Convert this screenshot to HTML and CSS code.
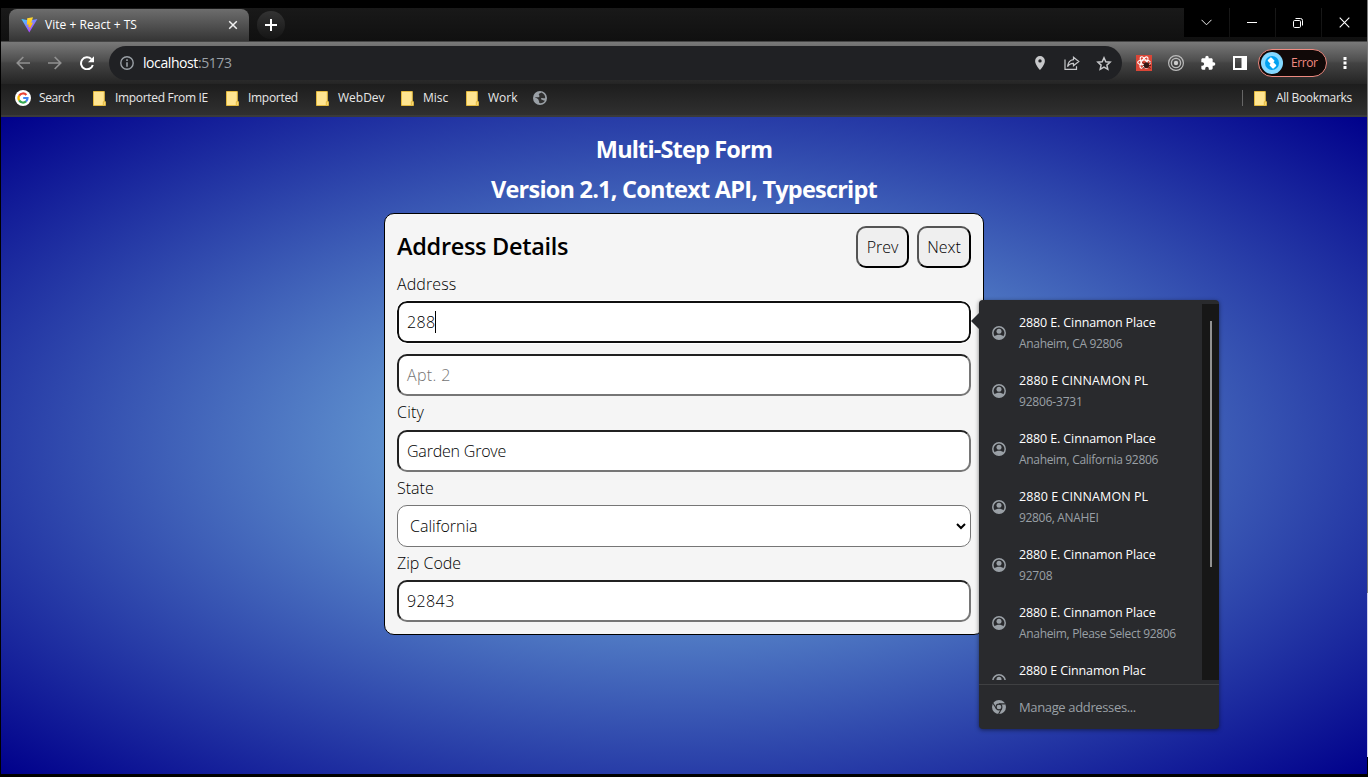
FILE: index.html
```html
<!DOCTYPE html>
<html lang="en">
<head>
<meta charset="utf-8">
<title>Vite + React + TS</title>
<link rel="stylesheet" href="styles.css">
</head>
<body>
<svg class="defs" width="0" height="0">
  <symbol id="folder" viewBox="0 0 13 15"><path d="M.5.5h10.8v10.2h.9v3.8H.5z" fill="#ffe591" stroke="#e3b93e"/><path d="M10.3 14.5v-3.8h1.9v3.8z" fill="#ffe591" stroke="#e3b93e"/></symbol>
  <symbol id="person" viewBox="0 0 14 14"><circle cx="7" cy="7" r="6.2" fill="none" stroke="#9aa0a6" stroke-width="1.5"/><circle cx="7" cy="5.2" r="2.5" fill="#9aa0a6"/><path d="M2.3 10.8C3.1 9.2 5.6 8.7 7 8.7s3.900.5 4.700 2.100A6 6 0 0 1 7 13.300a6 6 0 0 1-4.700-2.500z" fill="#9aa0a6"/></symbol>
</svg>
<div class="window">
  <div class="tabstrip">
    <div class="tab">
      <svg class="vite" width="17" height="16" viewBox="0 0 17 16"><defs><linearGradient id="va" x1="0" y1="0" x2=".7" y2="1"><stop offset="0" stop-color="#41d1ff"/><stop offset="1" stop-color="#bd34fe"/></linearGradient><linearGradient id="vb" x1="0" y1="0" x2="0" y2="1"><stop offset="0" stop-color="#ffdd35"/><stop offset="1" stop-color="#ffa800"/></linearGradient></defs><path d="M.4 2 8.300 15.600 16.400 2 8.500 3.400z" fill="url(#va)"/><path d="M12 .2 6.200 1.300 5.900 7.800l1.900-.4-.6 2.700 1.500-.4-.5 3.300 3.900-7.500-1.900.4z" fill="url(#vb)"/></svg>
      <span class="tab-title">Vite + React + TS</span>
      <svg class="tab-close" width="10" height="10" viewBox="0 0 10 10"><path d="M1.200 1.200l7.600 7.600M8.800 1.200 1.200 8.800" stroke="#f1f1f1" stroke-width="1.500"/></svg>
    </div>
    <div class="newtab"><svg width="12" height="12" viewBox="0 0 12 12"><path d="M6 0v12M0 6h12" stroke="#fff" stroke-width="2"/></svg></div>
    <div class="controls">
      <div class="control"><svg width="11" height="7" viewBox="0 0 11 7"><path d="M.5.8l5 5 5-5" fill="none" stroke="#eee"/></svg></div>
      <div class="control"><svg width="10" height="1" viewBox="0 0 10 1"><path d="M0 .5h10" stroke="#fff"/></svg></div>
      <div class="control"><svg width="10" height="10" viewBox="0 0 10 10"><rect x=".5" y="2.500" width="7" height="7" rx="1.200" fill="none" stroke="#fff"/><path d="M2.500.5h5a2 2 0 0 1 2 2v5" fill="none" stroke="#fff"/></svg></div>
      <div class="control"><svg width="11" height="11" viewBox="0 0 11 11"><path d="M.7.7l9.600 9.600M10.300.7.7 10.300" stroke="#fff" stroke-width="1.100"/></svg></div>
    </div>
  </div>
  <div class="toolbar">
    <svg class="nav" width="14" height="14" viewBox="0 0 14 14"><path d="M14 7H1.500M7.300 1 1.300 7l6 6" fill="none" stroke="#919191" stroke-width="1.700"/></svg>
    <svg class="nav" width="14" height="14" viewBox="0 0 14 14"><path d="M0 7h12.500M6.700 1l6 6-6 6" fill="none" stroke="#919191" stroke-width="1.700"/></svg>
    <svg class="nav" width="14" height="14" viewBox="0 0 14 14"><path d="M11.300 3A6 6 0 1 0 12.800 9" fill="none" stroke="#fff" stroke-width="2"/><path d="M14 .2v6H8z" fill="#fff"/></svg>
    <div class="omnibox">
      <svg width="14" height="14" viewBox="0 0 14 14"><circle cx="7" cy="7" r="6.200" fill="none" stroke="#9aa0a6" stroke-width="1.400"/><path d="M7 3.300v1.600M7 6.200v4.500" stroke="#9aa0a6" stroke-width="1.600"/></svg>
      <div class="url">localhost<span>:5173</span></div>
      <div class="omni-icons">
        <svg width="10" height="14" viewBox="0 0 10 14"><path d="M5 0a4.900 4.900 0 0 0-4.900 4.900C.1 8.500 5 14 5 14s4.900-5.500 4.900-9.100A4.900 4.900 0 0 0 5 0zm0 6.600a1.700 1.700 0 1 1 0-3.400 1.700 1.700 0 0 1 0 3.400z" fill="#c7c8ca"/></svg>
        <svg width="16" height="14" viewBox="0 0 16 14"><path d="M1 3.500v9.800h11.500v-3" fill="none" stroke="#c7c8ca" stroke-width="1.200"/><path d="M9.500 1.200 14.800 5.500 9.500 9.800V7.300C6.500 7.200 4.700 8.500 3.500 10.600 4 6.500 6 4.100 9.500 3.700z" fill="none" stroke="#c7c8ca" stroke-width="1.200"/></svg>
        <svg width="16" height="15" viewBox="0 0 16 15"><path d="M8 1.800l1.800 4 4.300.4-3.200 2.900.9 4.200L8 11.100l-3.800 2.200.9-4.200-3.200-2.900 4.300-.4z" fill="none" stroke="#c7c8ca" stroke-width="1.500"/></svg>
      </div>
    </div>
    <div class="extensions">
      <svg width="16" height="16" viewBox="0 0 16 16"><path d="M0 0h16v16H0z" fill="#da4637"/><g fill="none" stroke="#fff" stroke-width="1.100"><ellipse cx="8" cy="7.500" rx="6.300" ry="2.500"/><ellipse cx="8" cy="7.500" rx="6.300" ry="2.500" transform="rotate(60 8 7.500)"/><ellipse cx="8" cy="7.500" rx="6.300" ry="2.500" transform="rotate(120 8 7.500)"/></g><ellipse cx="10.500" cy="10.300" rx="2.600" ry="3" fill="#341613"/><path d="M6.500 7.500l8 6M14.500 7.500l-8 6M6.500 10.500h8.500" stroke="#341613" stroke-width=".8"/></svg>
      <svg width="16" height="16" viewBox="0 0 16 16"><circle cx="8" cy="8" r="7.400" fill="none" stroke="#bbb" stroke-width="1.200"/><circle cx="8" cy="8" r="4.600" fill="none" stroke="#bbb" stroke-width="1.400"/><circle cx="8" cy="8" r="2.200" fill="#ccc"/></svg>
      <svg width="16" height="16" viewBox="0 0 24 24"><path d="M20.500 11H19V7c0-1.100-.9-2-2-2h-4V3.500a2.500 2.500 0 0 0-5 0V5H4c-1.100 0-2 .9-2 2v3.800h1.500a2.700 2.700 0 0 1 0 5.400H2V20c0 1.100.9 2 2 2h3.800v-1.500a2.700 2.700 0 0 1 5.400 0V22H17c1.100 0 2-.9 2-2v-4h1.500a2.500 2.500 0 0 0 0-5z" fill="#fff"/></svg>
      <svg width="16" height="16" viewBox="0 0 16 16"><path d="M2 2h12v12H2z" fill="none" stroke="#fff" stroke-width="2"/><path d="M9.500 1H15v14H9.500z" fill="#fff"/></svg>
    </div>
    <div class="profile">
      <svg width="22" height="22" viewBox="0 0 22 22"><circle cx="11" cy="11" r="11" fill="#84d8ff"/><circle cx="11" cy="11" r="7" fill="#00a1f1"/><g fill="#fff" transform="rotate(45 11 11)"><rect x="6" y="7.500" width="5.500" height="5" rx="1"/><rect x="10.500" y="9.500" width="5.500" height="5" rx="1"/></g></svg>
      <span>Error</span>
    </div>
    <svg class="kebab" width="4" height="14" viewBox="0 0 4 14"><path d="M.5 1h3v3h-3zM.5 5.500h3v3h-3zM.5 10h3v3h-3z" fill="#fff"/></svg>
  </div>
  <div class="bookmarks">
    <svg class="google" width="16" height="16" viewBox="0 0 16 16"><circle cx="8" cy="8" r="8" fill="#fff"/><g fill="none" stroke-width="2.200"><path d="M4.200 5.600A4.500 4.500 0 0 1 11.400 5" stroke="#ea4335"/><path d="M4.200 10.400A4.500 4.500 0 0 1 4.200 5.600" stroke="#fbbc05"/><path d="M11 11.400A4.500 4.500 0 0 1 4.200 10.400" stroke="#34a853"/><path d="M8.200 8h4.300A4.500 4.500 0 0 1 11 11.400" stroke="#4285f4"/></g></svg>
    <span class="bm search">Search</span>
    <svg class="folder"><use href="#folder"/></svg><span class="bm ie">Imported From IE</span>
    <svg class="folder"><use href="#folder"/></svg><span class="bm imported">Imported</span>
    <svg class="folder"><use href="#folder"/></svg><span class="bm webdev">WebDev</span>
    <svg class="folder"><use href="#folder"/></svg><span class="bm misc">Misc</span>
    <svg class="folder"><use href="#folder"/></svg><span class="bm work">Work</span>
    <svg width="14" height="14" viewBox="0 0 14 14"><circle cx="7" cy="7" r="7" fill="#9aa0a6"/><path d="M8.300 1.500c-.6 1-2.300.7-2.500 1.800-.2 1 1 1.200.6 2.200C5.800 6.800 3.500 6.200 1.800 6c.8 1.200 3.500 1.500 3.700 2.800.2 1.300 1.300 2 .6 3.200 2.500.5 5-.4 5.700-2.500-1.200.5-1.500-.8-2.800-.8-1 0-1.300-1-.6-1.600.9-.7 2.500.5 3.800.2C12.500 4.800 11 2.300 8.300 1.500z" fill="#303030"/></svg>
    <div class="all"><svg class="folder"><use href="#folder"/></svg><span class="bm allbm">All Bookmarks</span></div>
  </div>
  <main class="page">
    <h1 class="title one">Multi-Step Form</h1>
    <h1 class="title two">Version 2.1, Context API, Typescript</h1>
    <form class="card">
      <div class="card-head">
        <h2 class="heading">Address Details</h2>
        <button type="button" class="btn prev">Prev</button>
        <button type="button" class="btn next">Next</button>
      </div>
      <div class="label address">Address</div>
      <div class="field focus"><span class="num">288</span><span class="caret"></span></div>
      <div class="field second placeholder">Apt. 2</div>
      <div class="label city">City</div>
      <div class="field grove">Garden Grove</div>
      <div class="label">State</div>
      <div class="field select"><span>California</span><svg width="10" height="7" viewBox="0 0 10 7"><path d="M1 1l4 4 4-4" fill="none" stroke="#000" stroke-width="2"/></svg></div>
      <div class="label zip">Zip Code</div>
      <div class="field num">92843</div>
    </form>
  </main>
</div>
<div class="popup">
  <svg class="arrow" width="8" height="16" viewBox="0 0 8 16"><path d="M8 0 0 8l8 8z" fill="#292a2d"/></svg>
  <div class="list">
    <div class="items">
      <div class="item"><svg width="14" height="14"><use href="#person"/></svg><div><div class="name">2880 E. Cinnamon Place</div><div class="sub">Anaheim, CA 92806</div></div></div>
      <div class="item"><svg width="14" height="14"><use href="#person"/></svg><div><div class="name caps">2880 E CINNAMON PL</div><div class="sub digits">92806-3731</div></div></div>
      <div class="item"><svg width="14" height="14"><use href="#person"/></svg><div><div class="name">2880 E. Cinnamon Place</div><div class="sub">Anaheim, California 92806</div></div></div>
      <div class="item"><svg width="14" height="14"><use href="#person"/></svg><div><div class="name caps">2880 E CINNAMON PL</div><div class="sub">92806, ANAHEI</div></div></div>
      <div class="item"><svg width="14" height="14"><use href="#person"/></svg><div><div class="name">2880 E. Cinnamon Place</div><div class="sub digits">92708</div></div></div>
      <div class="item"><svg width="14" height="14"><use href="#person"/></svg><div><div class="name">2880 E. Cinnamon Place</div><div class="sub">Anaheim, Please Select 92806</div></div></div>
      <div class="item"><svg width="14" height="14"><use href="#person"/></svg><div><div class="name">2880 E Cinnamon Plac</div></div></div>
    </div>
    <div class="track"><div class="thumb"></div></div>
  </div>
  <div class="manage">
    <svg width="14" height="14" viewBox="0 0 14 14"><circle cx="7" cy="7" r="7" fill="#9aa0a6"/><circle cx="7" cy="7" r="2.900" fill="#9aa0a6" stroke="#292a2d" stroke-width="1.100"/><path d="M7 3.900h6.500M4.300 8.500 1 3.200M9.700 8.500 6.600 14" stroke="#292a2d" stroke-width="1.100"/></svg>
    <span>Manage addresses...</span>
  </div>
</div>
</body>
</html>
```
FILE: styles.css
```css
* { box-sizing: border-box; }
body { margin: 0; width: 1368px; height: 777px; overflow: hidden; background: #000; font-family: "Open Sans", "Noto Sans", sans-serif; }
svg { flex: none; display: block; }
.defs { position: absolute; }
.window { display: flex; flex-direction: column; height: 777px; padding: 8px 1px 3px; background: linear-gradient(#7c7c7c 593px, #cfcfec 593px, #cfcfec 757px, #000 757px) right / 1px 100% no-repeat; }
.tabstrip { display: flex; height: 33px; flex: none; padding-left: 8px; background: linear-gradient(#191919, #101010); }
.tab { display: flex; align-items: center; width: 240px; height: 32px; margin-top: 1px; padding: 0 11px 0 12px; border-radius: 8px 8px 0 0; background: linear-gradient(#6d6d6d, #353535); color: #fff; font-size: 12px; }
.tab-title { margin-left: 7px; margin-top: -2px; letter-spacing: .03px; white-space: nowrap; }
.tab-close { margin-left: auto; }
.newtab { display: flex; align-items: center; justify-content: center; width: 28px; height: 28px; margin: 3px 0 0 8px; border-radius: 50%; background: linear-gradient(#333, #151515); }
.controls { display: flex; gap: 1px; margin-left: auto; height: 29px; }
.control { display: flex; align-items: center; justify-content: center; width: 45px; padding-right: 1px; background: #000; }
.toolbar { display: flex; align-items: center; height: 43px; flex: none; padding-left: 15px; border-top: 1px solid #454545; background: linear-gradient(#797979, #4e4e4e 45%, #434343 50%, #242424); }
.nav { margin-right: 18px; }
.omnibox { display: flex; align-items: center; width: 1013px; height: 34px; margin-left: -3px; padding: 0 10px 0 11px; border-radius: 17px; background: #202124; }
.url { margin: -2px 0 0 9px; color: #fff; font-size: 14px; letter-spacing: -.42px; }
.url span { color: #9aa0a6; }
.omni-icons { display: flex; align-items: center; gap: 16px; margin-left: auto; }
.omni-icons svg:first-child { margin-right: 3px; }
.extensions { display: flex; gap: 16px; margin-left: 14px; }
.profile { display: flex; align-items: center; width: 69px; height: 28px; margin-left: 10px; padding-left: 2px; border: 1.500px solid #ee8a80; border-radius: 14px; background: #110908; color: #f28b82; font-size: 12px; letter-spacing: -.4px; }
.profile span { margin: -2px 0 0 8px; }
.kebab { margin-left: 16px; }
.bookmarks { display: flex; align-items: center; height: 33px; flex: none; padding: 0 15px 5px 14px; background: linear-gradient(#1d1d1d, #303030 94%, #3a3a3a 94%); color: #e8e8e8; font-size: 12px; white-space: nowrap; }
.folder { width: 13px; height: 15px; }
.google { margin-right: -1px; }
.bm { margin: -2px 0 0 9px; }
.search { width: 54px; letter-spacing: -.45px; }
.ie { width: 111px; letter-spacing: -.32px; }
.imported { width: 68px; letter-spacing: -.3px; }
.webdev { width: 63px; }
.misc { width: 43px; }
.work { width: 45px; }
.allbm { letter-spacing: -.3px; }
.all { display: flex; align-items: center; height: 16px; margin-left: auto; padding-left: 11px; border-left: 1px solid #666; }
.page { display: flex; flex-direction: column; align-items: center; flex: 1; padding-top: 12px; background: radial-gradient(skyblue, darkblue); }
.title { margin: 0; height: 40px; line-height: 40px; color: #fff; font-size: 23.500px; font-weight: 700; letter-spacing: -.84px; white-space: nowrap; }
.two { height: 44px; letter-spacing: -.78px; }
.card { width: 600px; height: 422px; padding: 12px; border: 1px solid #000; border-radius: 10px; background: #f5f5f5; color: #000; font-size: 16px; font-weight: 330; }
.card-head { display: flex; align-items: center; gap: 8px; height: 42px; }
.heading { flex: 1; margin: -2px 0 0; font-size: 23.500px; font-weight: 600; letter-spacing: -.3px; }
.btn { width: 53px; height: 42px; padding: 0 0 1px; border: 2px outset #000; border-radius: 10px; background: #efefef; color: #000; font: inherit; }
.next { width: 54px; }
.label { height: 33px; line-height: 33px; }
.address { letter-spacing: .1px; }
.city { height: 34px; letter-spacing: .2px; }
.field { display: flex; align-items: center; height: 42px; padding: 0 8px 1px; border: 2px inset #767676; border-radius: 10px; background: #fff; }
.grove { letter-spacing: -.2px; }
.num { letter-spacing: .4px; }
.focus { border: 2px solid #101010; outline: 1px solid #fff; }
.second { margin-top: 11px; }
.placeholder { color: #757575; letter-spacing: .35px; }
.caret { width: 1px; height: 22px; margin-left: -1px; background: #000; }
.select { justify-content: space-between; padding: 0 4px 0 12px; border: 1px solid #767676; }
.popup { position: absolute; left: 979px; top: 300px; width: 240px; height: 429px; padding-top: 4px; border-radius: 4px; background: #292a2d; box-shadow: 0 1px 4px rgba(0,0,0,.5); }
.arrow { position: absolute; left: -8px; top: 13px; }
.list { display: flex; height: 376px; overflow: hidden; }
.items { flex: 1; }
.item { display: flex; align-items: center; gap: 13px; height: 58px; padding-left: 13px; white-space: nowrap; }
.item:last-child > div { height: 42px; }
.name { height: 21px; line-height: 21px; color: #fff; font-size: 12.500px; letter-spacing: -.12px; }
.caps { letter-spacing: .08px; }
.sub { height: 21px; line-height: 21px; color: #9aa0a6; font-size: 12px; letter-spacing: -.32px; }
.digits { letter-spacing: -.2px; }
.track { width: 17px; padding: 17px 0 0 8px; background: #171717; }
.thumb { width: 2px; height: 246px; background: #929292; }
.manage { display: flex; align-items: center; gap: 13px; height: 45px; margin-top: 4px; padding-left: 13px; border-top: 1px solid #3f4042; color: #9aa0a6; font-size: 13px; letter-spacing: -.36px; }
```
